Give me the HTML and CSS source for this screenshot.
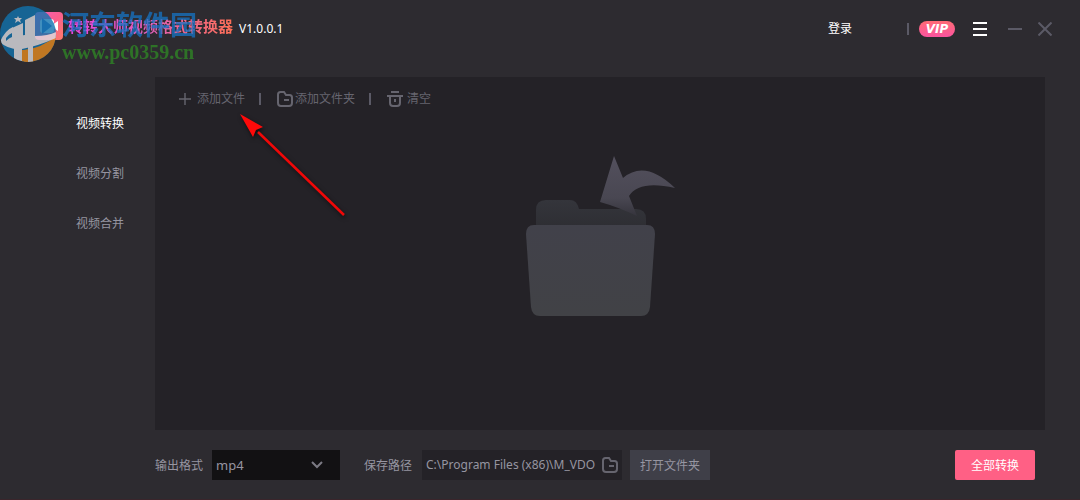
FILE: index.html
```html
<!DOCTYPE html>
<html lang="zh-CN">
<head>
    <meta charset="UTF-8">
    <meta name="viewport" content="width=device-width, initial-scale=1.0">
    <title>转转大师视频格式转换器</title>
    <link rel="stylesheet" href="styles.css">
</head>
<body>
    <div class="app">
        <header class="titlebar">
            <svg class="logo" width="28" height="28" viewBox="0 0 28 28" aria-hidden="true">
                <defs>
                    <linearGradient id="logo-bg" x1="0" y1="0" x2="1" y2="1">
                        <stop offset="0" stop-color="#f05fc0"/>
                        <stop offset="0.5" stop-color="#fb5f8c"/>
                        <stop offset="1" stop-color="#ff7a6a"/>
                    </linearGradient>
                </defs>
                <rect width="28" height="28" rx="4" fill="url(#logo-bg)"/>
                <rect x="5" y="7" width="14" height="14" rx="3" fill="#fff"/>
                <path d="M17 13l6-4v10l-6-4z" fill="#fff"/>
                <path d="M7 6l10 8-10 8z" fill="#3e63b5"/>
            </svg>
            <h1>转转大师视频格式转换器</h1>
            <span class="version">V1.0.0.1</span>
            <div class="window-tools">
                <a class="login" href="#">登录</a>
                <span class="divider"></span>
                <button class="vip">VIP</button>
                <button class="icon-btn menu-btn" aria-label="菜单">
                    <svg width="14" height="14" viewBox="0 0 14 14"><path d="M0 1h14M0 7h14M0 13h14" stroke="#fff" stroke-width="2"/></svg>
                </button>
                <button class="icon-btn min-btn" aria-label="最小化">
                    <svg width="14" height="14" viewBox="0 0 14 14"><path d="M0 7h14" stroke="#5b5a66" stroke-width="2"/></svg>
                </button>
                <button class="icon-btn" aria-label="关闭">
                    <svg width="14" height="14" viewBox="0 0 14 14"><path d="M0.5 0.5l13 13M13.5 0.5l-13 13" stroke="#5b5a66" stroke-width="2"/></svg>
                </button>
            </div>
        </header>

        <main class="content">
            <nav class="sidebar">
                <a class="active" href="#">视频转换</a>
                <a href="#">视频分割</a>
                <a href="#">视频合并</a>
            </nav>
            <section class="panel">
                <div class="toolbar">
                    <button class="tool add-file">
                        <svg width="12" height="12" viewBox="0 0 12 12"><path d="M6 0v12M0 6h12" stroke="#66656f" stroke-width="1.4"/></svg>
                        添加文件
                    </button>
                    <span class="divider"></span>
                    <button class="tool add-folder">
                        <svg width="16" height="16" viewBox="0 0 16 16" fill="none" stroke="#66656f" stroke-width="2"><path d="M3.5 1H7l2 3h3.5Q15 4 15 6.5V12Q15 15 12 15H4Q1 15 1 12V3.5Q1 1 3.5 1zM7 9h5"/></svg>
                        添加文件夹
                    </button>
                    <span class="divider"></span>
                    <button class="tool clear">
                        <svg width="16" height="16" viewBox="0 0 16 16" fill="none" stroke="#66656f" stroke-width="2"><path d="M4 1h8M0 5h16M3 5v7q0 3 3 3h4q3 0 3-3V5M8 8v3"/></svg>
                        清空
                    </button>
                </div>
                <div class="drop-area">
                    <svg width="150" height="162" viewBox="0 0 150 162" aria-hidden="true">
                        <defs>
                            <linearGradient id="folder-back" x1="0" y1="0" x2="0" y2="1">
                                <stop offset="0" stop-color="#34353b"/>
                                <stop offset="1" stop-color="#2c2c31"/>
                            </linearGradient>
                            <linearGradient id="folder-front" x1="0" y1="0" x2="0" y2="1">
                                <stop offset="0" stop-color="#41414a"/>
                                <stop offset="1" stop-color="#414246"/>
                            </linearGradient>
                            <linearGradient id="drop-arrow" x1="0" y1="0" x2="0" y2="1">
                                <stop offset="0" stop-color="#53505d"/>
                                <stop offset="0.7" stop-color="#494752"/>
                                <stop offset="1" stop-color="#35343c"/>
                            </linearGradient>
                        </defs>
                        <path d="M11 80V54q0-10 10-10h24q7 0 9 9h57q10 0 10 10v17z" fill="url(#folder-back)"/>
                        <path d="M89 0L98 22Q120 3 150 32Q114 24 104 40L112 60Q93 51 75 46z" fill="url(#drop-arrow)"/>
                        <path d="M9 69h113q8 0 8 9l-5 73q-1 9-9 9H15q-8 0-9-9L1 78q0-9 8-9z" fill="url(#folder-front)"/>
                    </svg>
                </div>
            </section>
        </main>

        <footer class="output-bar">
            <label for="format">输出格式</label>
            <div class="select-box">
                <select id="format">
                    <option>mp4</option>
                    <option>avi</option>
                    <option>mov</option>
                </select>
                <svg class="chevron" width="12" height="8" viewBox="0 0 12 8"><path d="M1 1l5 5 5-5" fill="none" stroke="#7b7a84" stroke-width="2"/></svg>
            </div>
            <label class="path-label" for="save-path">保存路径</label>
            <div class="path-box">
                <input type="text" id="save-path" value="C:\Program Files (x86)\M_VDO">
                <button class="icon-btn" aria-label="选择路径">
                    <svg width="16" height="16" viewBox="0 0 16 16" fill="none" stroke="#66656f" stroke-width="2"><path d="M3.5 1H7l2 3h3.5Q15 4 15 6.5V12Q15 15 12 15H4Q1 15 1 12V3.5Q1 1 3.5 1zM7 9h5"/></svg>
                </button>
            </div>
            <button class="open-btn">打开文件夹</button>
            <button class="convert-btn">全部转换</button>
        </footer>

        <!-- site stamp -->
        <div class="stamp">
            <svg class="stamp-logo" width="56" height="56" viewBox="0 0 56 56" aria-hidden="true">
                <defs><clipPath id="disc"><circle cx="28" cy="28" r="28"/></clipPath></defs>
                <g clip-path="url(#disc)">
                    <path d="M0 0h56v56H0z" fill="#1173ae"/>
                    <path d="M24 56V44Q42 42 56 30v26z" fill="#e58a1f"/>
                    <path d="M0 36Q5 24 13 21V33Q22 29 25 29V14l10-5v21Q48 30 56 26v6Q38 40 22 43Q8 44 0 36z" fill="#dcdde2"/>
                    <path d="M12 22l11-5v18l-11 3z" fill="#dcdde2"/>
                    <path d="M14 42h8v14h-8zM28 41l5-2v17h-5z" fill="#dcdde2"/>
                    <path d="M6 32Q9 28 12 27v4Q9 32 6 35z" fill="#1173ae"/>
                    <path d="M22 44h6v12h-6z" fill="#e58a1f"/>
                </g>
                <path d="M18 10l1 2h3l-2 2 1 3-3-2-3 2 1-3-2-2h3z" fill="#dcdde2"/>
            </svg>
            <div class="stamp-text">
                <span class="stamp-name">河东软件园</span>
                <span class="stamp-url">www.pc0359.cn</span>
            </div>
        </div>

        <!-- pointer to the add file button -->
        <svg class="pointer" width="112" height="110" viewBox="0 0 112 110" aria-hidden="true">
            <path d="M20 22L106 105" stroke="#f00808" stroke-width="2.5"/>
            <path d="M2 4L25 17L18 20L15 27z" fill="#ff0a0a"/>
        </svg>
    </div>
</body>
</html>
```
FILE: styles.css
```css
* {
    box-sizing: border-box;
}
body {
    margin: 0;
    background-color: #2d2b30;
    color: #9695a1;
    font-family: "Noto Sans", "Noto Sans CJK SC", sans-serif;
    font-size: 12px;
}
button, input, select {
    font-family: inherit;
    font-size: 12px;
    color: inherit;
    border: none;
    background: none;
    padding: 0;
}
button {
    cursor: pointer;
}
a {
    color: inherit;
    text-decoration: none;
}
svg {
    display: block;
    flex: none;
}
.app {
    position: relative;
    display: flex;
    flex-direction: column;
    min-height: 100vh;
    border-bottom: 1px solid #3a252b;
}
.titlebar {
    display: flex;
    align-items: center;
    height: 77px;
    padding: 0 28px 20px 35px;
}
.logo {
    margin: 0 5px 6px 0;
}
h1 {
    margin: 0 6px 6px 0;
    font-size: 15px;
    line-height: 20px;
    background: linear-gradient(90deg, #e845e0, #e060b8 50%, #ff6f55);
    -webkit-background-clip: text;
    background-clip: text;
    color: transparent;
}
.version {
    color: #fff;
    font-size: 12px;
}
.window-tools {
    display: flex;
    align-items: center;
    margin-left: auto;
    color: #fff;
}
.divider {
    width: 2px;
    height: 12px;
    background-color: #5b5a66;
}
.login {
    margin-right: 55px;
    padding-bottom: 2px;
}
.vip {
    width: 36px;
    height: 16px;
    margin: 0 18px 0 10px;
    border-radius: 8px;
    background: linear-gradient(#ff6b75, #fb549f);
    font-family: "DejaVu Sans", sans-serif;
    font-weight: bold;
    font-style: italic;
    line-height: 16px;
}
.menu-btn {
    margin-right: 21px;
}
.min-btn {
    margin-right: 16px;
}
.content {
    display: flex;
    flex: 1;
    padding-right: 35px;
}
.sidebar {
    display: flex;
    flex-direction: column;
    gap: 30px;
    width: 155px;
    padding: 37px 0 0 76px;
    line-height: 20px;
}
.sidebar .active {
    color: #fff;
}
.panel {
    display: flex;
    flex-direction: column;
    flex: 1;
    background-color: #242227;
}
.toolbar {
    display: flex;
    align-items: center;
    height: 44px;
    padding-left: 24px;
    color: #66656f;
}
.tool {
    display: flex;
    align-items: center;
    gap: 6px;
    line-height: 20px;
}
.add-file, .add-folder {
    margin-right: 14px;
}
.add-folder {
    gap: 2px;
}
.add-folder, .clear {
    margin-left: 16px;
}
.clear {
    gap: 4px;
}
.drop-area {
    display: flex;
    flex: 1;
    justify-content: center;
    padding-top: 35px;
}
.output-bar {
    display: flex;
    align-items: center;
    height: 69px;
    padding: 0 45px 0 155px;
}
.select-box {
    position: relative;
    margin: 0 24px 0 9px;
}
.select-box select {
    appearance: none;
    display: block;
    width: 128px;
    height: 30px;
    padding: 0 4px;
    background-color: #121113;
    font-size: 13px;
}
.chevron {
    position: absolute;
    top: 11px;
    right: 17px;
    pointer-events: none;
}
.path-box {
    display: flex;
    align-items: center;
    width: 200px;
    height: 30px;
    margin: 0 8px 0 10px;
    padding: 0 4px;
    gap: 4px;
    background-color: #242227;
}
.path-box input {
    flex: 1;
    min-width: 0;
}
.open-btn {
    width: 80px;
    height: 30px;
    background-color: #3f3f48;
}
.convert-btn {
    width: 80px;
    height: 30px;
    margin-left: auto;
    border-radius: 2px;
    background-color: #ff6085;
    color: #fff;
}
.stamp {
    position: absolute;
    top: 6px;
    left: 0;
    display: flex;
    gap: 6px;
    pointer-events: none;
}
.stamp-logo {
    opacity: 0.8;
}
.stamp-text {
    display: flex;
    flex-direction: column;
    opacity: 0.75;
    font-weight: bold;
    white-space: nowrap;
}
.stamp-name {
    color: #1673c4;
    font-family: "Noto Sans CJK SC", sans-serif;
    font-size: 27px;
    line-height: 36px;
}
.stamp-url {
    color: #2f8a24;
    font-family: "Liberation Serif", serif;
    font-size: 20px;
    line-height: 20px;
}
.pointer {
    position: absolute;
    top: 110px;
    left: 238px;
    filter: drop-shadow(1px 2px 2px rgba(0,0,0,0.6));
    pointer-events: none;
}
```
